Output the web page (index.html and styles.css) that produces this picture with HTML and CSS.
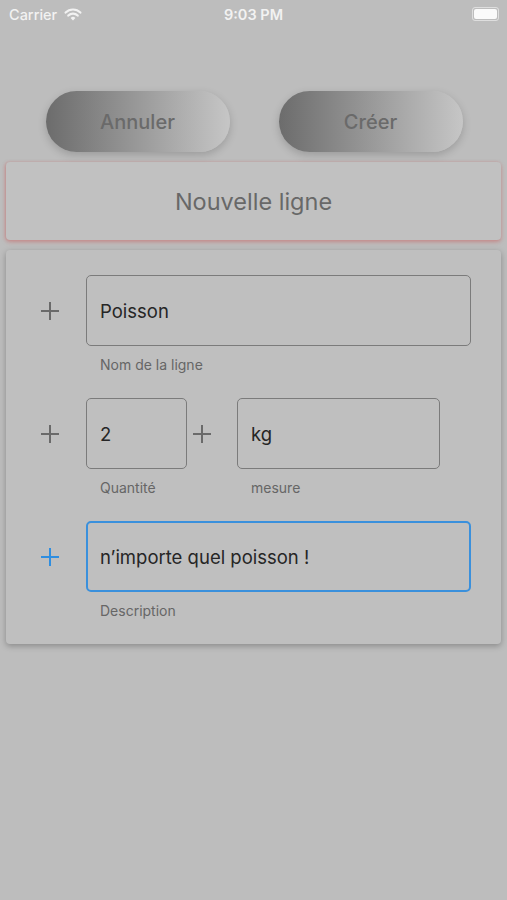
FILE: index.html
```html
<!DOCTYPE html>
<html lang="fr">
<head>
  <meta charset="UTF-8" />
  <meta name="viewport" content="width=device-width, initial-scale=1.0"/>
  <title>Nouvelle ligne</title>
  <link rel="stylesheet" href="styles.css">
</head>
<body>
  <div class="status-bar">
    <div class="status-left">
      <span>Carrier</span>
      <svg class="wifi" width="18" height="14" viewBox="0 0 18 14">
        <path d="M9 13.5 L6.6 10.9 A3.4 3.4 0 0 1 11.4 10.9 Z" fill="#f2f2f2"/>
        <path d="M4.3 8.6 A6.6 6.6 0 0 1 13.7 8.6" stroke="#f2f2f2" stroke-width="2.2" fill="none" stroke-linecap="round"/>
        <path d="M1.6 5.6 A10.4 10.4 0 0 1 16.4 5.6" stroke="#f2f2f2" stroke-width="2.2" fill="none" stroke-linecap="round"/>
      </svg>
    </div>
    <div class="status-time">9:03 PM</div>
    <div class="status-right">
      <div class="battery"><div class="battery-fill"></div></div>
    </div>
  </div>

  <div class="actions">
    <button class="pill">Annuler</button>
    <button class="pill">Créer</button>
  </div>

  <div class="title-card">Nouvelle ligne</div>

  <div class="form-card">
    <div class="field-row">
      <div class="plus"><span></span></div>
      <div class="field wide">
        <div class="input">Poisson</div>
        <div class="hint">Nom de la ligne</div>
      </div>
    </div>

    <div class="field-row">
      <div class="plus"><span></span></div>
      <div class="field qty">
        <div class="input">2</div>
        <div class="hint">Quantité</div>
      </div>
      <div class="plus small"><span></span></div>
      <div class="field unit">
        <div class="input">kg</div>
        <div class="hint">mesure</div>
      </div>
    </div>

    <div class="field-row">
      <div class="plus active"><span></span></div>
      <div class="field wide">
        <div class="input focused">n’importe quel poisson !</div>
        <div class="hint">Description</div>
      </div>
    </div>
  </div>
</body>
</html>
```

FILE: styles.css
```css
body {
    margin: 0;
    padding: 0;
    width: 507px;
    height: 900px;
    background: #bdbdbd;
    font-family: 'Inter', 'Noto Sans', sans-serif;
    overflow: hidden;
}

/* Status bar */
.status-bar {
    height: 28px;
    display: flex;
    align-items: center;
    padding: 0 9px;
    color: #f2f2f2;
    font-size: 14.5px;
    font-weight: 500;
}

.status-left {
    flex: 1;
    display: flex;
    align-items: center;
    gap: 7px;
}

.status-time {
    flex: 1;
    text-align: center;
    font-weight: 600;
}

.status-right {
    flex: 1;
    display: flex;
    justify-content: flex-end;
}

.battery {
    width: 23px;
    height: 10px;
    border: 1px solid rgba(255, 255, 255, 0.5);
    border-radius: 3px;
    padding: 1px;
    margin-right: -1px;
}

.battery-fill {
    width: 100%;
    height: 100%;
    background: #fafafa;
    border-radius: 2px;
}

/* Buttons */
.actions {
    display: flex;
    justify-content: center;
    gap: 49px;
    margin-top: 63px;
    padding-left: 1px;
}

.pill {
    width: 184px;
    height: 61px;
    border: none;
    border-radius: 31px;
    background: linear-gradient(to right, #6c6c6c, #c6c6c6);
    box-shadow: 0 3px 8px rgba(0, 0, 0, 0.18);
    color: #6a6a6a;
    font-family: 'Inter', 'Noto Sans', sans-serif;
    font-size: 20px;
    font-weight: 500;
    padding: 0;
}

/* Title card */
.title-card {
    margin: 10px 6px 0;
    height: 78px;
    display: flex;
    justify-content: center;
    align-items: center;
    background: #c1c1c1;
    border-radius: 4px;
    box-shadow: 0 2px 4px rgba(200, 110, 110, 0.6), -1px 0 3px rgba(200, 110, 110, 0.35);
    color: #686868;
    font-size: 23.5px;
}

/* Form card */
.form-card {
    margin: 10px 6px 0;
    height: 394px;
    box-sizing: border-box;
    padding: 25px 30px 0 14px;
    background: #bfbfbf;
    border-radius: 4px;
    box-shadow: 0 2px 6px rgba(0, 0, 0, 0.28);
    display: flex;
    flex-direction: column;
    gap: 24px;
}

.field-row {
    display: flex;
    align-items: flex-start;
}

.plus {
    width: 60px;
    height: 71px;
    margin-right: 6px;
    display: flex;
    justify-content: center;
    align-items: center;
}

.plus span {
    width: 18px;
    height: 18px;
    background:
        linear-gradient(#6a6a6a, #6a6a6a) center / 18px 2px no-repeat,
        linear-gradient(#6a6a6a, #6a6a6a) center / 2px 18px no-repeat;
}

.plus.small {
    width: 30px;
    margin: 0 20px 0 0;
}

.plus.active span {
    background:
        linear-gradient(#2f8ee0, #2f8ee0) center / 18px 2px no-repeat,
        linear-gradient(#2f8ee0, #2f8ee0) center / 2px 18px no-repeat;
}

.field.wide {
    flex: 1;
}

.field.qty {
    width: 101px;
}

.field.unit {
    width: 203px;
}

.input {
    height: 71px;
    box-sizing: border-box;
    border: 1px solid #7b7b7b;
    border-radius: 5px;
    padding: 0 13px;
    display: flex;
    align-items: center;
    color: #262626;
    font-size: 18.5px;
}

.input.focused {
    border: 2px solid #3a90dc;
    padding: 0 12px;
}

.hint {
    margin-top: 10px;
    padding-left: 14px;
    height: 18px;
    line-height: 18px;
    color: #666;
    font-size: 14px;
}
```
